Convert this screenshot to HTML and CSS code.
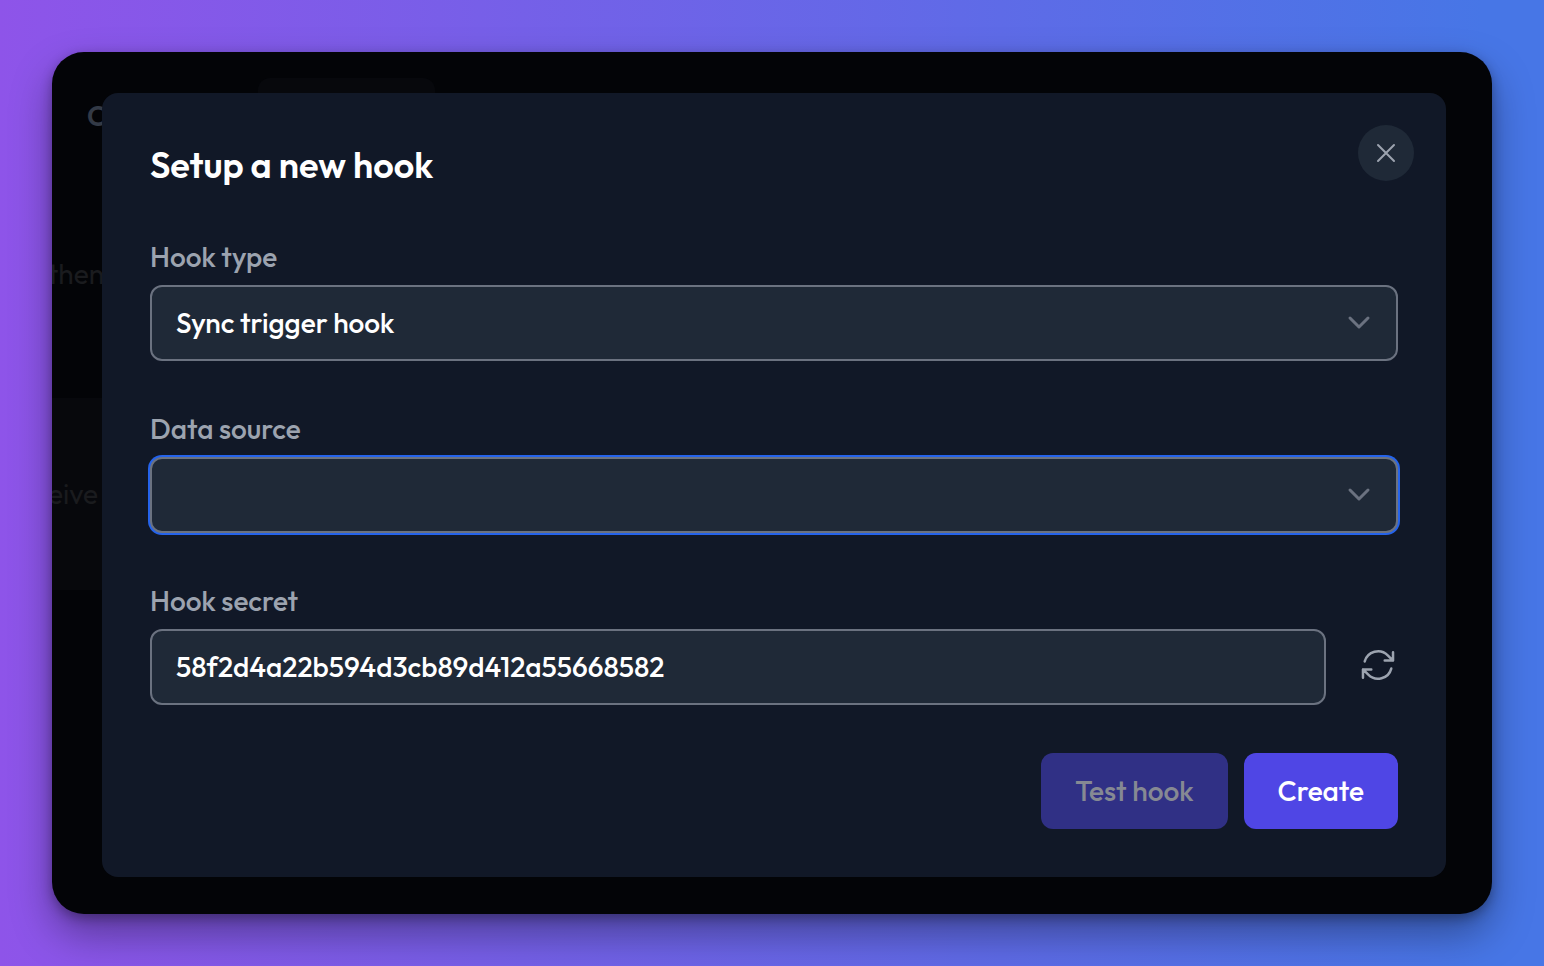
FILE: index.html
```html
<!DOCTYPE html>
<html lang="en">
<head>
    <meta charset="UTF-8">
    <meta name="viewport" content="width=device-width, initial-scale=1.0">
    <title>Setup a new hook</title>
    <link rel="stylesheet" href="styles.css">
</head>
<body>
    <div class="window">
        <div class="page">
            <div class="page-nav">
                <span class="page-brand">C</span>
                <span class="page-tab"></span>
            </div>
            <p class="page-text">then</p>
            <div class="page-panel">eive</div>
        </div>

        <div class="modal" role="dialog" aria-labelledby="modal-title">
            <div class="modal-header">
                <h1 id="modal-title">Setup a new hook</h1>
                <button type="button" class="close-btn" aria-label="Close">
                    <svg width="20" height="20" viewBox="0 0 20 20">
                        <path d="M2 2l16 16M18 2L2 18"/>
                    </svg>
                </button>
            </div>

            <form class="hook-form">
                <div class="field">
                    <label for="hook-type">Hook type</label>
                    <div class="select-wrap">
                        <select id="hook-type">
                            <option>Sync trigger hook</option>
                        </select>
                        <svg class="chevron" width="24" height="16" viewBox="0 0 24 16">
                            <path d="M3 3l9 9 9-9"/>
                        </svg>
                    </div>
                </div>

                <div class="field">
                    <label for="data-source">Data source</label>
                    <div class="select-wrap">
                        <select id="data-source" class="focused">
                            <option></option>
                        </select>
                        <svg class="chevron" width="24" height="16" viewBox="0 0 24 16">
                            <path d="M3 3l9 9 9-9"/>
                        </svg>
                    </div>
                </div>

                <div class="field">
                    <label for="hook-secret">Hook secret</label>
                    <div class="secret-row">
                        <input type="text" id="hook-secret" value="58f2d4a22b594d3cb89d412a55668582">
                        <button type="button" class="refresh-btn" aria-label="Generate secret">
                            <svg width="40" height="40" viewBox="0 0 24 24">
                                <path d="M16.023 9.348h4.992v-.001M2.985 19.644v-4.992m0 0h4.992m-4.993 0l3.181 3.183a8.25 8.25 0 0013.803-3.7M4.031 9.865a8.25 8.25 0 0113.803-3.7l3.181 3.182m0-4.991v4.99"/>
                            </svg>
                        </button>
                    </div>
                </div>

                <div class="actions">
                    <button type="button" class="btn" disabled>Test hook</button>
                    <button type="submit" class="btn">Create</button>
                </div>
            </form>
        </div>
    </div>
</body>
</html>
```

FILE: styles.css
```css
* {
    box-sizing: border-box;
}
body {
    margin: 0;
    padding: 52px;
    min-height: 100vh;
    display: flex;
    background: linear-gradient(90deg, #8e54e9, #4776e6 96%);
    font-family: Outfit, Lato, sans-serif;
    font-size: 28px;
    font-weight: 500;
    color: #fff;
}
.window {
    flex: 1;
    display: grid;
    border-radius: 32px;
    overflow: hidden;
    background: #030407;
    box-shadow: 0 20px 40px rgba(0,0,0,0.35), 0 4px 12px rgba(0,0,0,0.3);
}
.page,
.modal {
    grid-area: 1 / 1;
}

/* dimmed page behind the modal */
.page {
    padding-top: 26px;
    padding-right: 52px;
    color: #1a1b1e;
    line-height: 36px;
    font-weight: 400;
}
.page-nav {
    display: flex;
    align-items: center;
    gap: 152px;
    padding-left: 35px;
}
.page-brand {
    color: #333a46;
    font-weight: 600;
}
.page-tab {
    width: 177px;
    height: 76px;
    border-radius: 12px;
    background: #07080c;
}
.page-text {
    margin: 102px 0 106px;
    text-indent: -4px;
}
.page-panel {
    padding: 78px 0;
    background: #07080c;
    text-indent: -4px;
}

.modal {
    margin: 41px 46px 37px 50px;
    padding: 32px 48px 48px;
    border-radius: 16px;
    background: #111827;
    align-self: start;
}
.modal-header {
    display: flex;
    align-items: flex-start;
    justify-content: space-between;
    margin-right: -16px;
    margin-bottom: 56px;
}
.modal-header h1 {
    margin: 0;
    padding-top: 20px;
    font-size: 36px;
    line-height: 40px;
    font-weight: 600;
}
button,
input,
select {
    font: inherit;
    color: inherit;
}
.close-btn {
    display: flex;
    align-items: center;
    justify-content: center;
    width: 56px;
    height: 56px;
    padding: 0;
    border: none;
    border-radius: 50%;
    background: #1f2937;
    cursor: pointer;
}
svg {
    fill: none;
    stroke: #9ca3af;
    stroke-width: 2;
    stroke-linecap: round;
    stroke-linejoin: round;
}
.field {
    margin-bottom: 52px;
}
.field label {
    display: block;
    margin-bottom: 12px;
    line-height: 32px;
    color: #9ca3af;
}
.field input,
.field select {
    display: block;
    width: 100%;
    height: 76px;
    padding: 0 24px 2px;
    border: 2px solid #6b7280;
    border-radius: 12px;
    background: #1f2937;
    outline: none;
    appearance: none;
}
.field select.focused,
.field select:focus,
.field input:focus {
    box-shadow: 0 0 0 2px #2563eb;
}
.select-wrap {
    position: relative;
}
.chevron {
    position: absolute;
    top: 30px;
    right: 27px;
    stroke: #6b7280;
    stroke-width: 3;
    pointer-events: none;
}
.secret-row {
    display: flex;
    align-items: center;
    gap: 32px;
}
.refresh-btn {
    display: flex;
    padding: 0 0 4px;
    border: none;
    background: none;
    cursor: pointer;
}
.refresh-btn svg {
    stroke-width: 1.5;
}
.field:has(.secret-row) {
    margin-bottom: 48px;
}
.actions {
    display: flex;
    justify-content: flex-end;
    gap: 16px;
}
.btn {
    height: 76px;
    padding: 0 34px 2px;
    border: none;
    border-radius: 12px;
    background: #4f46e5;
    font-weight: 500;
    cursor: pointer;
}
.btn:disabled {
    background: #303085;
    color: #868993;
    cursor: default;
}
```
